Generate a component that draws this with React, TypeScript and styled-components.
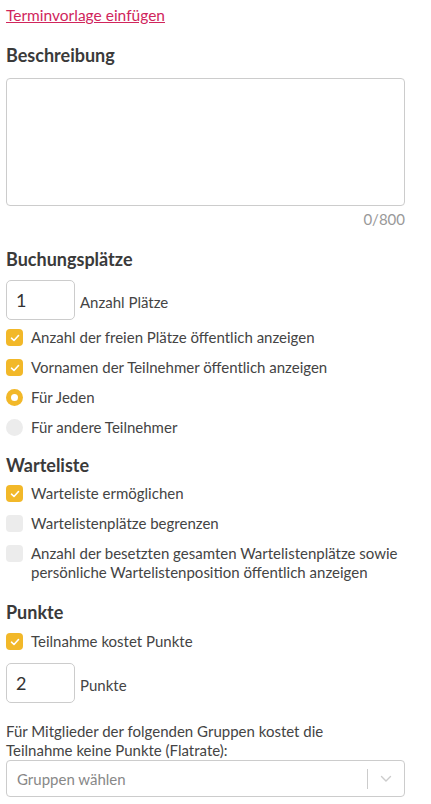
import React from 'react';
import styled, { createGlobalStyle } from 'styled-components';

const GlobalStyle = createGlobalStyle`
  html, body {
    margin: 0;
    padding: 0;
    background: #fff;
  }
  body {
    font-family: Lato, "Open Sans", "Liberation Sans", sans-serif;
    color: #444;
  }
`;

const Page = styled.div`
  width: 431px;
  padding: 6px 26px 0 6px;
  box-sizing: border-box;
  display: flex;
  flex-direction: column;
`;

const TemplateLink = styled.a`
  color: #d0255c;
  font-size: 15.5px;
  text-decoration: underline;
  line-height: 18px;
  cursor: pointer;
`;

const Heading = styled.h3<{ $top: number }>`
  margin: ${p => p.$top}px 0 0;
  font-size: 18px;
  font-weight: 700;
  color: #3a3a3a;
  line-height: 22px;
`;

const TextArea = styled.textarea`
  margin-top: 12px;
  height: 128px;
  border: 1px solid #ccc;
  border-radius: 4px;
  resize: none;
  box-sizing: border-box;
  font-family: inherit;
`;

const Counter = styled.div`
  align-self: flex-end;
  margin-top: 4px;
  font-size: 15px;
  color: #999;
  line-height: 18px;
`;

const NumberRow = styled.div<{ $top: number }>`
  display: flex;
  align-items: center;
  gap: 5px;
  margin-top: ${p => p.$top}px;
`;

const NumberBox = styled.div`
  width: 69px;
  height: 40px;
  border: 1px solid #ccc;
  border-radius: 5px;
  box-sizing: border-box;
  padding: 0 9px;
  display: flex;
  align-items: center;
  font-size: 18px;
  color: #333;
`;

const InlineLabel = styled.span`
  font-size: 15px;
  padding-top: 4px;
`;

const OptionRow = styled.label<{ $top: number }>`
  display: flex;
  align-items: flex-start;
  gap: 8px;
  margin-top: ${p => p.$top}px;
  font-size: 15px;
  line-height: 19px;
`;

const Box = styled.span<{ $on: boolean; $round?: boolean }>`
  flex: none;
  width: 17px;
  height: 17px;
  margin-top: 1px;
  border-radius: ${p => (p.$round ? '50%' : '4px')};
  background: ${p => (p.$on ? '#f2b829' : '#ececec')};
  display: flex;
  align-items: center;
  justify-content: center;
`;

const Dot = styled.span`
  width: 7px;
  height: 7px;
  border-radius: 50%;
  background: #fff;
`;

const Paragraph = styled.p`
  margin: 19px 0 0;
  max-width: 385px;
  font-size: 15px;
  line-height: 19px;
`;

const Select = styled.div`
  margin-top: 0;
  height: 37px;
  border: 1px solid #ccc;
  border-radius: 4px;
  box-sizing: border-box;
  display: flex;
  align-items: center;
`;

const Placeholder = styled.span`
  flex: 1;
  padding-left: 10px;
  font-size: 15px;
  color: #888;
`;

const Separator = styled.span`
  width: 1px;
  height: 20px;
  background: #ccc;
`;

const Chevron = styled.span`
  width: 36px;
  display: flex;
  justify-content: center;
  color: #ccc;
`;

const Check = () => (
  <svg width="10" height="8" viewBox="0 0 10 8" fill="none">
    <path d="M1.5 4.2 L4 6.5 L8.5 1.5" stroke="#fff" strokeWidth="1.6" strokeLinecap="round" strokeLinejoin="round" />
  </svg>
);

type OptionProps = { on?: boolean; radio?: boolean; top?: number; children: React.ReactNode };

const Option = ({ on = false, radio = false, top = 11, children }: OptionProps) => (
  <OptionRow $top={top}>
    <Box $on={on} $round={radio}>
      {on && (radio ? <Dot /> : <Check />)}
    </Box>
    <span>{children}</span>
  </OptionRow>
);

export default function App() {
  return (
    <>
      <GlobalStyle />
      <Page>
        <TemplateLink>Terminvorlage einfügen</TemplateLink>

        <Heading $top={20}>Beschreibung</Heading>
        <TextArea />
        <Counter>0/800</Counter>

        <Heading $top={20}>Buchungsplätze</Heading>
        <NumberRow $top={10}>
          <NumberBox>1</NumberBox>
          <InlineLabel>Anzahl Plätze</InlineLabel>
        </NumberRow>
        <Option on top={8}>Anzahl der freien Plätze öffentlich anzeigen</Option>
        <Option on>Vornamen der Teilnehmer öffentlich anzeigen</Option>
        <Option on radio>Für Jeden</Option>
        <Option radio>Für andere Teilnehmer</Option>

        <Heading $top={17}>Warteliste</Heading>
        <Option on top={8}>Warteliste ermöglichen</Option>
        <Option>Wartelistenplätze begrenzen</Option>
        <Option>
          Anzahl der besetzten gesamten Wartelistenplätze sowie persönliche Wartelistenposition öffentlich anzeigen
        </Option>

        <Heading $top={19}>Punkte</Heading>
        <Option on top={9}>Teilnahme kostet Punkte</Option>
        <NumberRow $top={12}>
          <NumberBox>2</NumberBox>
          <InlineLabel>Punkte</InlineLabel>
        </NumberRow>

        <Paragraph>Für Mitglieder der folgenden Gruppen kostet die Teilnahme keine Punkte (Flatrate):</Paragraph>
        <Select>
          <Placeholder>Gruppen wählen</Placeholder>
          <Separator />
          <Chevron>
            <svg width="12" height="8" viewBox="0 0 12 8" fill="none">
              <path d="M1.5 1.5 L6 6 L10.5 1.5" stroke="currentColor" strokeWidth="1.4" strokeLinecap="round" />
            </svg>
          </Chevron>
        </Select>
      </Page>
    </>
  );
}
